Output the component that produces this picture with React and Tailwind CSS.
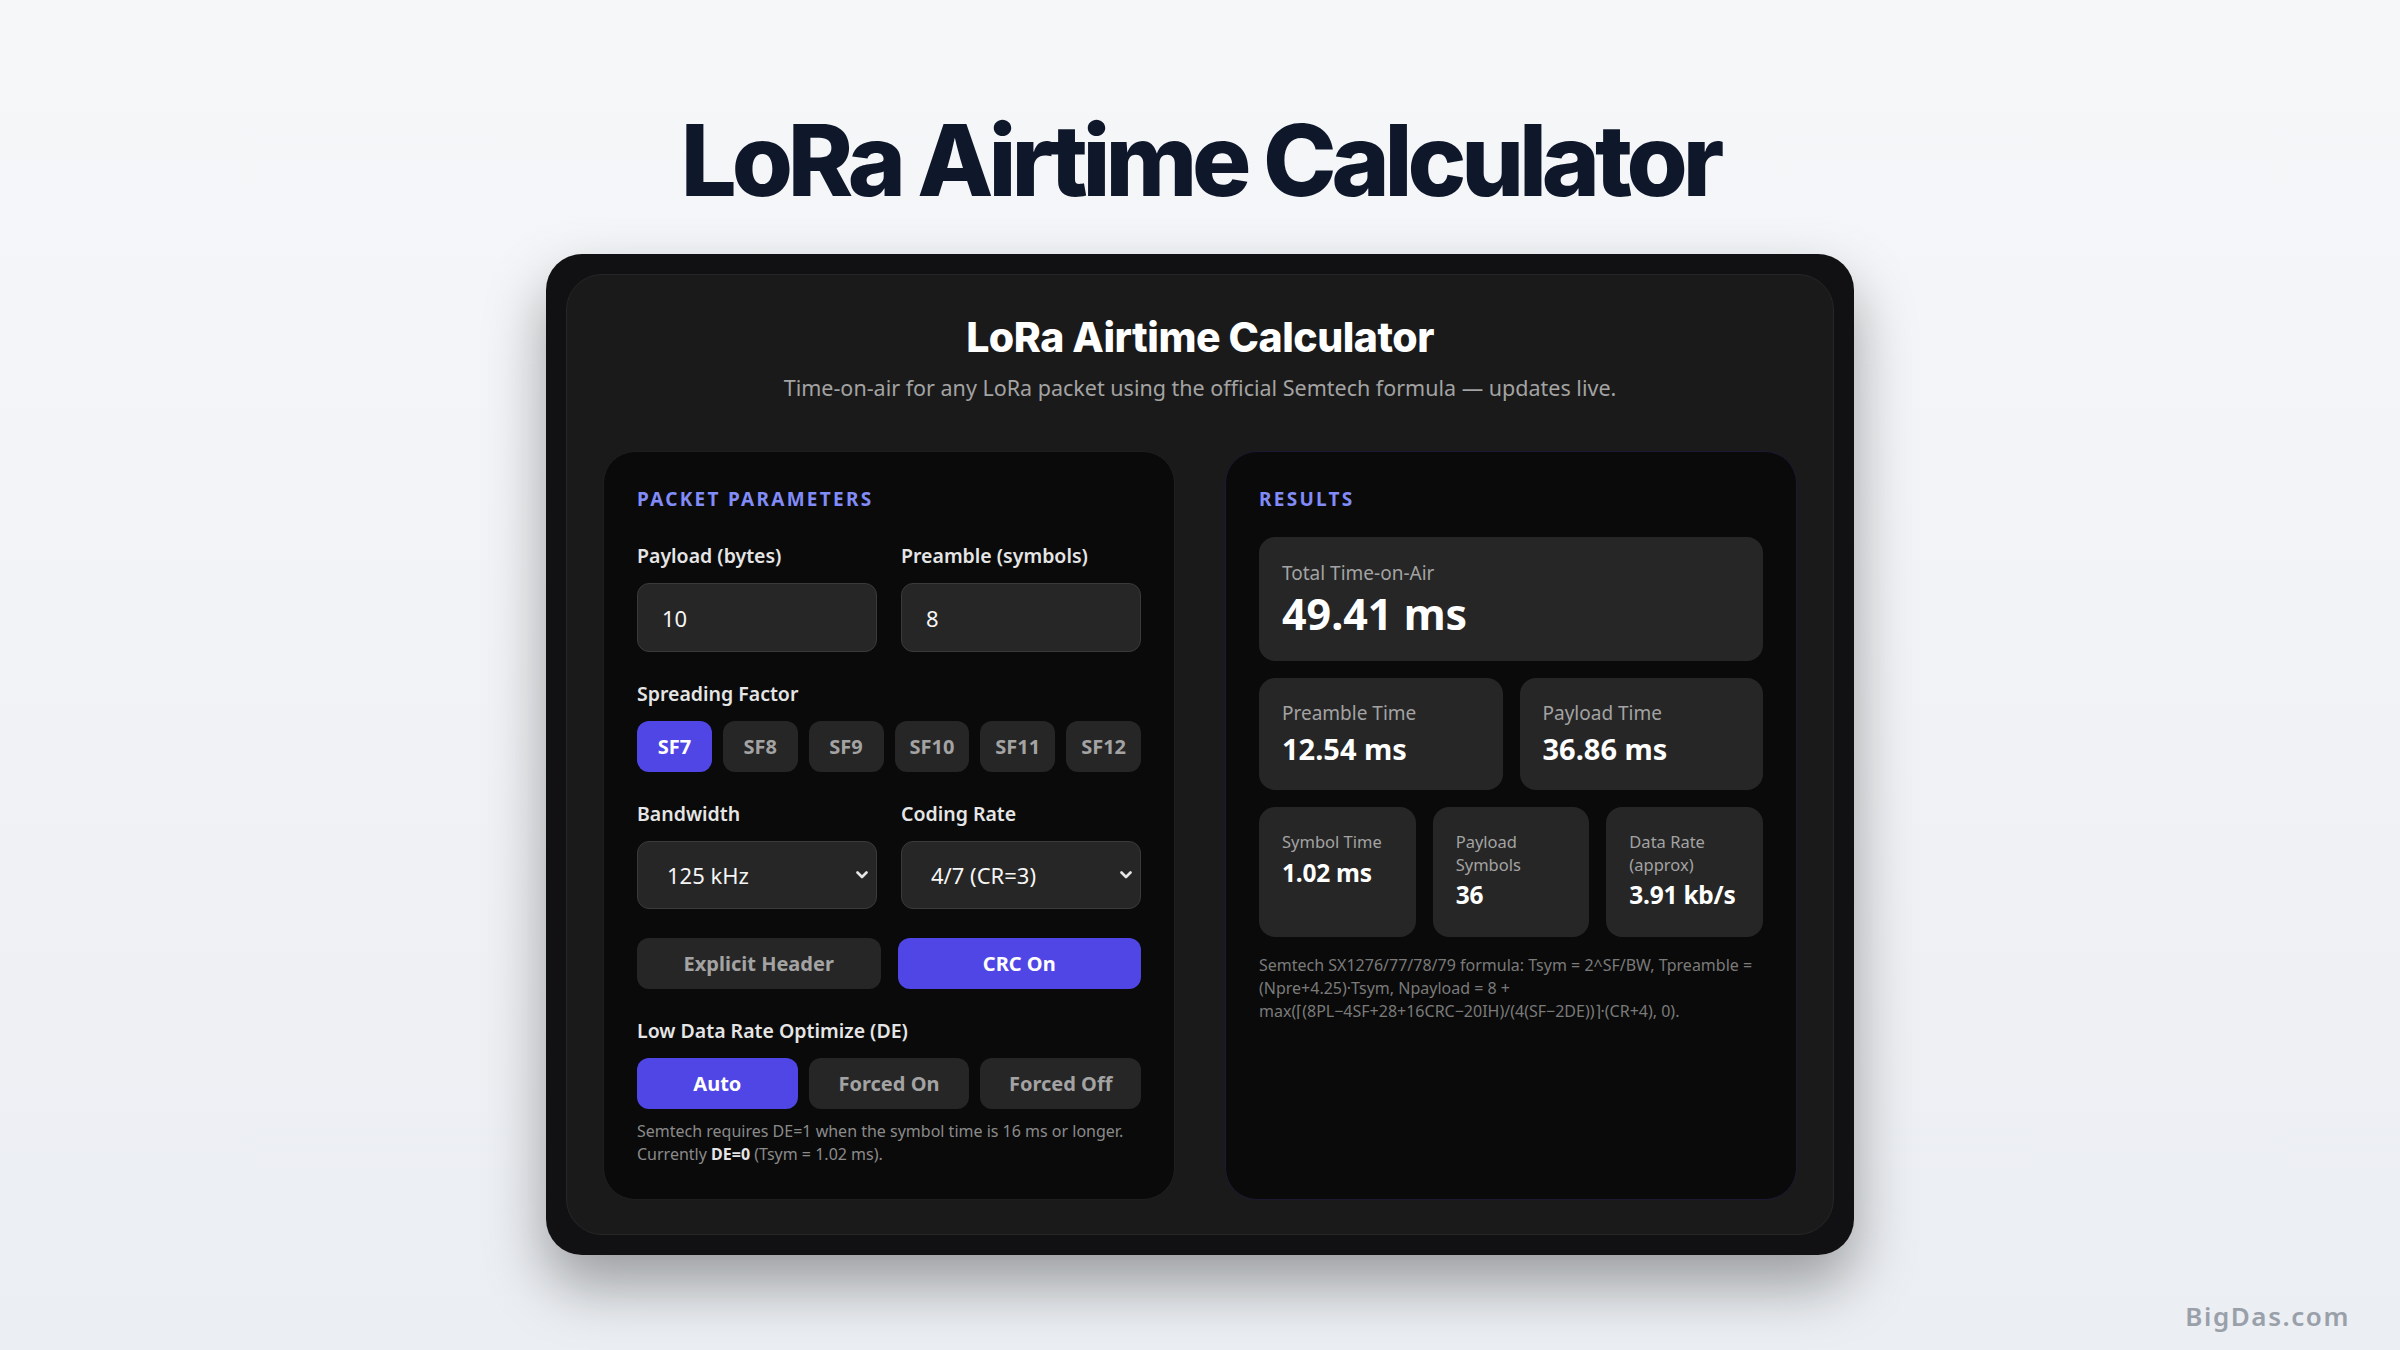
import { useMemo, useState } from 'react';

const SF_LIST = [7, 8, 9, 10, 11, 12];
const BW_LIST = [125, 250, 500];
const CR_LIST = [1, 2, 3, 4];

// Semtech SX127x time-on-air
function calcAirtime({ payload, preamble, sf, bw, cr, header, crc, deMode }) {
    const tsym = Math.pow(2, sf) / bw; // ms
    const de = deMode === 'on' ? 1 : deMode === 'off' ? 0 : tsym >= 16 ? 1 : 0;
    const ih = header ? 0 : 1;
    const tpre = (preamble + 4.25) * tsym;
    const num = 8 * payload - 4 * sf + 28 + 16 * (crc ? 1 : 0) - 20 * ih;
    const nPayload = 8 + Math.max(Math.ceil(num / (4 * (sf - 2 * de))) * (cr + 4), 0);
    const tpay = nPayload * tsym;
    const rate = (sf * (4 / (4 + cr))) / tsym;
    return { tsym, de, tpre, nPayload, tpay, total: tpre + tpay, rate };
}

function Label({ children }) {
    return <label className="block mb-[13px] text-[19.5px] leading-[28px] font-semibold text-[#e5e5e5]">{children}</label>;
}

function Chip({ active, onClick, children }) {
    return (
        <button
            onClick={onClick}
            className={`h-[51px] rounded-[12px] text-[20px] font-bold ${
                active ? 'bg-[#4f46e5] text-white' : 'bg-[#262626] text-[#a3a3a3]'
            }`}
        >
            {children}
        </button>
    );
}

function Chevron() {
    return (
        <svg className="pointer-events-none absolute right-[9px] top-1/2 -translate-y-1/2 w-[12px] h-[8px]" viewBox="0 0 12 8" fill="none">
            <path d="M1.5 1.5L6 6L10.5 1.5" stroke="#e5e5e5" strokeWidth="2.6" strokeLinecap="round" strokeLinejoin="round" />
        </svg>
    );
}

function Stat({ label, value, size = 'md' }) {
    if (size === 'lg') {
        return (
            <div className="rounded-[16px] bg-[#262626] px-[23px] pt-[23px] pb-[22px]">
                <div className="text-[19px] leading-[27px] text-[#a3a3a3]">{label}</div>
                <div className="mt-[2px] text-[43px] leading-[50px] font-bold text-white">{value}</div>
            </div>
        );
    }
    if (size === 'md') {
        return (
            <div className="rounded-[16px] bg-[#262626] px-[23px] pt-[22px] pb-[23px]">
                <div className="text-[19px] leading-[27px] text-[#a3a3a3]">{label}</div>
                <div className="mt-[4px] text-[29px] leading-[36px] font-bold text-white">{value}</div>
            </div>
        );
    }
    return (
        <div className="rounded-[16px] bg-[#262626] px-[23px] pt-[24px] pb-[26px]">
            <div className="text-[16.5px] leading-[22.5px] text-[#a3a3a3]">{label}</div>
            <div className="mt-[3px] whitespace-nowrap text-[24.5px] leading-[32px] font-bold tracking-[-0.01em] text-white">{value}</div>
        </div>
    );
}

export default function App() {
    const [payload, setPayload] = useState(10);
    const [preamble, setPreamble] = useState(8);
    const [sf, setSf] = useState(7);
    const [bw, setBw] = useState(125);
    const [cr, setCr] = useState(3);
    const [header, setHeader] = useState(false);
    const [crc, setCrc] = useState(true);
    const [deMode, setDeMode] = useState('auto');

    const r = useMemo(
        () => calcAirtime({ payload, preamble, sf, bw, cr, header: !header, crc, deMode }),
        [payload, preamble, sf, bw, cr, header, crc, deMode]
    );

    return (
        <div className="relative min-h-screen w-full bg-linear-to-b from-[#f6f7f9] to-[#ebeef2] flex flex-col items-center pt-[111px] pb-[96px] font-['Noto_Sans',sans-serif]">
            <h1 className="font-['Inter',sans-serif] text-[99px] leading-none font-extrabold tracking-[-0.052em] text-[#0f172a]">
                LoRa Airtime Calculator
            </h1>

            <div className="mt-[44px] w-[1308px] rounded-[36px] bg-[#111113] p-[20px] shadow-[0_30px_60px_rgba(0,0,0,0.35)]">
                <div className="rounded-[36px] border border-[#262626] bg-[#1a1a1a] px-[36px] pt-[38px] pb-[34px]">
                    <h2 className="text-center font-['Inter',sans-serif] text-[41px] leading-[49px] font-extrabold tracking-[-0.012em] text-white">
                        LoRa Airtime Calculator
                    </h2>
                    <p className="mt-[11px] text-center text-[21.5px] leading-[30px] text-[#a3a3a3]">
                        Time-on-air for any LoRa packet using the official Semtech formula — updates live.
                    </p>

                    <div className="mt-[48px] grid grid-cols-2 gap-[50px]">
                        {/* параметры пакета */}
                        <div className="rounded-[32px] border border-[#1f1f1f] bg-[#0a0a0a] p-[33px]">
                            <div className="text-[19px] leading-[28px] font-bold tracking-[0.12em] text-[#818cf8]">PACKET PARAMETERS</div>

                            <div className="mt-[29px] grid grid-cols-2 gap-x-[24px]">
                                <div>
                                    <Label>Payload (bytes)</Label>
                                    <input
                                        value={payload}
                                        onChange={e => setPayload(Number(e.target.value) || 0)}
                                        className="h-[69px] w-full rounded-[12px] border border-[#3a3a3a] bg-[#262626] px-[24px] text-[22px] text-[#f5f5f5] outline-none"
                                    />
                                </div>
                                <div>
                                    <Label>Preamble (symbols)</Label>
                                    <input
                                        value={preamble}
                                        onChange={e => setPreamble(Number(e.target.value) || 0)}
                                        className="h-[69px] w-full rounded-[12px] border border-[#3a3a3a] bg-[#262626] px-[24px] text-[22px] text-[#f5f5f5] outline-none"
                                    />
                                </div>
                            </div>

                            <div className="mt-[28px]">
                                <Label>Spreading Factor</Label>
                                <div className="grid grid-cols-6 gap-[11px]">
                                    {SF_LIST.map(s => (
                                        <Chip key={s} active={sf === s} onClick={() => setSf(s)}>SF{s}</Chip>
                                    ))}
                                </div>
                            </div>

                            <div className="mt-[28px] grid grid-cols-2 gap-x-[24px]">
                                <div>
                                    <Label>Bandwidth</Label>
                                    <div className="relative">
                                        <select
                                            value={bw}
                                            onChange={e => setBw(Number(e.target.value))}
                                            className="h-[68px] w-full appearance-none rounded-[12px] border border-[#3a3a3a] bg-[#262626] pl-[29px] text-[22px] text-[#f5f5f5] outline-none"
                                        >
                                            {BW_LIST.map(b => <option key={b} value={b}>{b} kHz</option>)}
                                        </select>
                                        <Chevron />
                                    </div>
                                </div>
                                <div>
                                    <Label>Coding Rate</Label>
                                    <div className="relative">
                                        <select
                                            value={cr}
                                            onChange={e => setCr(Number(e.target.value))}
                                            className="h-[68px] w-full appearance-none rounded-[12px] border border-[#3a3a3a] bg-[#262626] pl-[29px] text-[22px] text-[#f5f5f5] outline-none"
                                        >
                                            {CR_LIST.map(c => <option key={c} value={c}>4/{c + 4} (CR={c})</option>)}
                                        </select>
                                        <Chevron />
                                    </div>
                                </div>
                            </div>

                            <div className="mt-[29px] grid grid-cols-2 gap-[17px]">
                                <Chip active={header} onClick={() => setHeader(!header)}>Explicit Header</Chip>
                                <Chip active={crc} onClick={() => setCrc(!crc)}>CRC On</Chip>
                            </div>

                            <div className="mt-[28px]">
                                <Label>Low Data Rate Optimize (DE)</Label>
                                <div className="grid grid-cols-3 gap-[11px]">
                                    <Chip active={deMode === 'auto'} onClick={() => setDeMode('auto')}>Auto</Chip>
                                    <Chip active={deMode === 'on'} onClick={() => setDeMode('on')}>Forced On</Chip>
                                    <Chip active={deMode === 'off'} onClick={() => setDeMode('off')}>Forced Off</Chip>
                                </div>
                            </div>

                            <p className="mt-[11px] text-[16px] leading-[23px] text-[#8a8a8a]">
                                Semtech requires DE=1 when the symbol time is 16 ms or longer.
                                <br />
                                Currently <b className="font-bold text-[#e5e5e5]">DE={r.de}</b> (Tsym = {r.tsym.toFixed(2)} ms).
                            </p>
                        </div>

                        {/* результаты */}
                        <div className="rounded-[32px] border border-[#1c1a33] bg-[#0a0a0a] p-[33px]">
                            <div className="text-[19px] leading-[28px] font-bold tracking-[0.12em] text-[#818cf8]">RESULTS</div>

                            <div className="mt-[24px] flex flex-col gap-[17px]">
                                <Stat size="lg" label="Total Time-on-Air" value={`${r.total.toFixed(2)} ms`} />
                                <div className="grid grid-cols-2 gap-[17px]">
                                    <Stat label="Preamble Time" value={`${r.tpre.toFixed(2)} ms`} />
                                    <Stat label="Payload Time" value={`${r.tpay.toFixed(2)} ms`} />
                                </div>
                                <div className="grid grid-cols-3 gap-[17px]">
                                    <Stat size="sm" label="Symbol Time" value={`${r.tsym.toFixed(2)} ms`} />
                                    <Stat size="sm" label="Payload Symbols" value={r.nPayload} />
                                    <Stat size="sm" label="Data Rate (approx)" value={`${r.rate.toFixed(2)} kb/s`} />
                                </div>
                            </div>

                            <p className="mt-[17px] text-[16px] leading-[23px] text-[#7a7a7a]">
                                Semtech SX1276/77/78/79 formula: Tsym = 2^SF/BW, Tpreamble = (Npre+4.25)·Tsym, Npayload = 8 + max(⌈(8PL−4SF+28+16CRC−20IH)/(4(SF−2DE))⌉·(CR+4), 0).
                            </p>
                        </div>
                    </div>
                </div>
            </div>

            <div className="absolute right-[50px] bottom-[22px] text-[26px] leading-none font-semibold tracking-[0.06em] text-[#9aa0aa]">
                BigDas.com
            </div>
        </div>
    );
}
